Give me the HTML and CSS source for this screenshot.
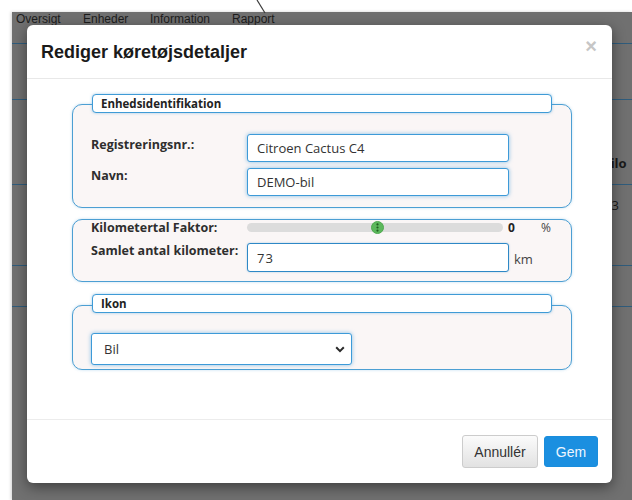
FILE: index.html
```html
<!DOCTYPE html>
<html lang="da">
<head>
<meta charset="utf-8">
<title>Rediger køretøjsdetaljer</title>
<link rel="stylesheet" href="styles.css">
</head>
<body>
<svg class="pointer" width="20" height="14" viewBox="0 0 20 14"><line x1="3" y1="0" x2="11" y2="13" /></svg>

<div class="screen">
  <nav class="tabs">
    <span class="tab t1">Oversigt</span>
    <span class="tab t2">Enheder</span>
    <span class="tab t3">Information</span>
    <span class="tab t4">Rapport</span>
  </nav>
  <div class="table">
    <div class="trow h1"></div>
    <div class="trow h2"></div>
    <div class="trow h3"><span class="thead">Kilo</span></div>
    <div class="trow h4"><span class="tcell">73</span></div>
    <div class="trow h5"></div>
  </div>
</div>

<div class="modal">
  <div class="modal-header">
    <h4 class="modal-title">Rediger køretøjsdetaljer</h4>
    <span class="close">×</span>
  </div>

  <div class="modal-body">
    <div class="group g1">
      <div class="group-title">Enhedsidentifikation</div>
      <div class="field first">
        <label class="label">Registreringsnr.:</label>
        <input class="input" type="text" value="Citroen Cactus C4">
      </div>
      <div class="field">
        <label class="label">Navn:</label>
        <input class="input" type="text" value="DEMO-bil">
      </div>
    </div>

    <div class="group g2">
      <div class="field slider-row">
        <label class="label">Kilometertal Faktor:</label>
        <div class="track">
          <svg class="handle" width="13" height="13" viewBox="0 0 13 13">
            <circle cx="6.5" cy="6.5" r="6" fill="#5cb85c" stroke="#4fa94f" stroke-width="1"/>
            <circle cx="6.5" cy="3.4" r="1.1" fill="#1f5f1f"/>
            <circle cx="6.5" cy="6.5" r="1.1" fill="#1f5f1f"/>
            <circle cx="6.5" cy="9.6" r="1.1" fill="#1f5f1f"/>
          </svg>
        </div>
        <span class="value">0</span>
        <span class="unit">%</span>
      </div>
      <div class="field km-row">
        <label class="label">Samlet antal kilometer:</label>
        <input class="input plain" type="text" value="73">
        <span class="unit km">km</span>
      </div>
    </div>

    <div class="group g3">
      <div class="group-title">Ikon</div>
      <div class="select">
        <span>Bil</span>
        <svg width="10" height="7" viewBox="0 0 10 7"><path d="M1.2 1.3 L5 5.1 L8.8 1.3" /></svg>
      </div>
    </div>
  </div>

  <div class="modal-footer">
    <button class="btn btn-default">Annullér</button>
    <button class="btn btn-primary">Gem</button>
  </div>
</div>
</body>
</html>
```

FILE: styles.css
```css
html, body {
  margin: 0;
  padding: 0;
}

body {
  width: 632px;
  height: 500px;
  background: #ffffff;
  position: relative;
  overflow: hidden;
  font-family: "Liberation Sans", Arial, sans-serif;
}

/* hairline pointer above the window */
.pointer {
  position: absolute;
  left: 254px;
  top: 0;
}
.pointer line {
  stroke: #3a3a3a;
  stroke-width: 1.2;
}

/* dimmed application behind the dialog */
.screen {
  margin: 12px 0 0 12px;
  height: 488px;
  background: #707070;
  overflow: hidden;
  box-shadow: -1px 0 3px rgba(0, 0, 0, 0.18);
}

.tabs {
  display: flex;
  height: 13px;
  padding-left: 4px;
  font-size: 12px;
  line-height: 15px;
  color: #1d1d1d;
  white-space: nowrap;
}
.tab { display: block; }
.t1 { width: 67px; }
.t2 { width: 67px; }
.t3 { width: 82px; }

.table {
  display: flex;
  flex-direction: column;
}
.trow {
  border-bottom: 1px solid #2f5c7c;
  box-sizing: border-box;
  font-family: "Open Sans", sans-serif;
  font-size: 13px;
  line-height: 16px;
  color: #1a1a1a;
  white-space: nowrap;
}
.h1 { height: 19px; }
.h2 { height: 56px; }
.h3 { height: 85px; padding-top: 55px; }
.h4 { height: 81px; padding-top: 12px; }
.h5 { height: 41px; }
.thead { font-weight: bold; margin-left: 590px; }
.tcell { margin-left: 592px; }

/* dialog */
.modal {
  position: absolute;
  left: 27px;
  top: 25px;
  width: 585px;
  height: 458px;
  background: #ffffff;
  border-radius: 6px;
  box-shadow: 0 4px 14px rgba(0, 0, 0, 0.45);
  display: flex;
  flex-direction: column;
}

.modal-header {
  height: 53px;
  border-bottom: 1px solid #e8e8e8;
  display: flex;
  align-items: center;
  justify-content: space-between;
  padding: 0 14px;
}
.modal-title {
  margin: 2px 0 0 0;
  font-size: 18px;
  font-weight: bold;
  color: #1a1a1a;
}
.close {
  font-size: 20px;
  font-weight: bold;
  color: #c6c6c6;
  margin-top: -11px;
  margin-right: 1px;
}

.modal-body {
  flex: 1;
  padding-top: 25px;
  font-family: "Open Sans", sans-serif;
}

.group {
  margin-left: 45px;
  width: 500px;
  box-sizing: border-box;
  border: 1px solid #4c9fd3;
  border-radius: 10px;
  background: #faf6f6;
  box-shadow: 0 0 3px rgba(76, 159, 211, 0.35);
  padding: 0 0 0 18px;
}

.group-title {
  margin: -11px 0 0 1px;
  width: 460px;
  height: 19px;
  box-sizing: border-box;
  border: 1px solid #3f9bd6;
  border-radius: 4px;
  background: #ffffff;
  box-shadow: 0 0 3px rgba(63, 155, 214, 0.5);
  padding-left: 8px;
  font-size: 11.5px;
  font-weight: bold;
  line-height: 17px;
  color: #222222;
}

.field {
  display: flex;
  align-items: flex-start;
}
.label {
  width: 156px;
  flex: none;
  font-size: 12.5px;
  font-weight: bold;
  line-height: 16px;
  color: #2e2e2e;
  padding-top: 3px;
  white-space: nowrap;
}

.input {
  width: 262px;
  height: 28px;
  box-sizing: border-box;
  margin: 0;
  border: 1px solid #3d9ad8;
  border-radius: 3px;
  background: #ffffff;
  box-shadow: 0 0 4px rgba(61, 154, 216, 0.6);
  padding: 0 9px;
  font-family: "Open Sans", sans-serif;
  font-size: 13px;
  color: #333333;
  outline: none;
}

.g1 { padding-bottom: 11px; }
.g1 .first { margin-top: 21px; }
.g1 .field + .field { margin-top: 6px; }
.g1 .field + .field .label { padding-top: 0; }

.g2 {
  margin-top: 11px;
  padding-top: 1px;
  padding-bottom: 9px;
}
.slider-row {
  height: 13px;
  align-items: center;
}
.slider-row .label { padding-top: 0; }
.track {
  position: relative;
  width: 256px;
  height: 9px;
  border-radius: 5px;
  background: #dcdcdc;
}
.handle {
  position: absolute;
  left: 124px;
  top: -2px;
}
.value {
  margin-left: 5px;
  width: 33px;
  font-size: 12px;
  font-weight: bold;
  color: #222222;
}
.unit {
  font-size: 12px;
  color: #444444;
}
.km-row {
  margin-top: 9px;
}
.km-row .label { padding-top: 0; }
.plain {
  height: 29px;
  border-color: #2e88c6;
  box-shadow: 0 0 2px rgba(46, 136, 198, 0.4);
  letter-spacing: 1px;
}
.km {
  margin: 7px 0 0 5px;
  font-size: 13px;
}

.g3 {
  margin-top: 23px;
  padding-bottom: 4px;
}
.g3 .group-title { margin-top: -12px; }
.select {
  margin-top: 20px;
  width: 261px;
  height: 32px;
  box-sizing: border-box;
  border: 1px solid #3d9ad8;
  border-radius: 3px;
  background: #ffffff;
  box-shadow: 0 0 4px rgba(61, 154, 216, 0.6);
  display: flex;
  align-items: center;
  justify-content: space-between;
  padding: 0 6px 0 12px;
  font-size: 13px;
  color: #333333;
}
.select path {
  fill: none;
  stroke: #2a2a2a;
  stroke-width: 2;
}

.modal-footer {
  height: 63px;
  border-top: 1px solid #ececec;
  display: flex;
  justify-content: flex-end;
  align-items: center;
  padding-right: 14px;
  gap: 6px;
}
.btn {
  font-family: "Liberation Sans", Arial, sans-serif;
  font-size: 14px;
  border-radius: 3px;
  margin: 0;
  cursor: pointer;
}
.btn-default {
  width: 76px;
  height: 33px;
  border: 1px solid #cccccc;
  background: linear-gradient(#fbfbfb, #e2e2e2);
  color: #333333;
}
.btn-primary {
  width: 54px;
  height: 31px;
  border: 1px solid #1a8ddc;
  background: #1b8fe0;
  color: #eef6ff;
}
```
